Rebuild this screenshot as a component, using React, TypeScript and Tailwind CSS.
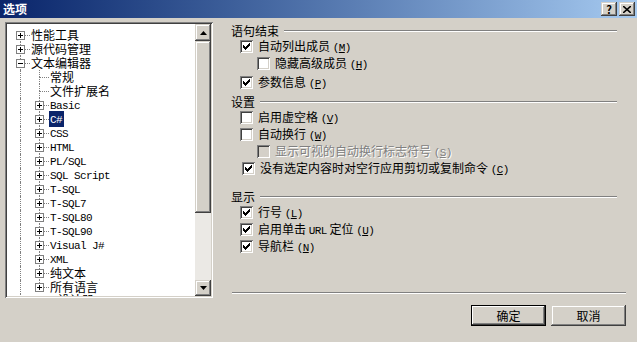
import React from 'react';

const cjk = "font-['Noto_Sans_CJK_SC',sans-serif]";
const mono = "font-['Liberation_Mono','Noto_Sans_CJK_SC',monospace] text-[11px] tracking-[-0.6px]";

const raised =
  'bg-[#d4d0c8] shadow-[inset_-1px_-1px_#404040,inset_1px_1px_#d4d0c8,inset_-2px_-2px_#808080,inset_2px_2px_#ffffff]';
const sunken =
  'shadow-[inset_1px_1px_#808080,inset_-1px_-1px_#ffffff,inset_2px_2px_#404040,inset_-2px_-2px_#d4d0c8]';

// split ascii runs into the narrow latin font
const Rich: React.FC<{ text: string }> = ({ text }) => (
  <>
    {text.split(/([\x21-\x7e][\x20-\x7e]*[\x21-\x7e]|[\x21-\x7e])/).map((part, i) =>
      /[\x21-\x7e]/.test(part) ? (
        <span key={i} className={mono}>{part}</span>
      ) : (
        <span key={i}>{part}</span>
      )
    )}
  </>
);

type Node = {
  label: string;
  level: 0 | 1;
  kind: 'plus' | 'minus' | 'leaf';
  first?: boolean;
  last?: boolean;
  selected?: boolean;
};

const nodes: Node[] = [
  { label: '性能工具', level: 0, kind: 'plus', first: true },
  { label: '源代码管理', level: 0, kind: 'plus' },
  { label: '文本编辑器', level: 0, kind: 'minus' },
  { label: '常规', level: 1, kind: 'leaf' },
  { label: '文件扩展名', level: 1, kind: 'leaf' },
  { label: 'Basic', level: 1, kind: 'plus' },
  { label: 'C#', level: 1, kind: 'plus', selected: true },
  { label: 'CSS', level: 1, kind: 'plus' },
  { label: 'HTML', level: 1, kind: 'plus' },
  { label: 'PL/SQL', level: 1, kind: 'plus' },
  { label: 'SQL Script', level: 1, kind: 'plus' },
  { label: 'T-SQL', level: 1, kind: 'plus' },
  { label: 'T-SQL7', level: 1, kind: 'plus' },
  { label: 'T-SQL80', level: 1, kind: 'plus' },
  { label: 'T-SQL90', level: 1, kind: 'plus' },
  { label: 'Visual J#', level: 1, kind: 'plus' },
  { label: 'XML', level: 1, kind: 'plus' },
  { label: '纯文本', level: 1, kind: 'plus' },
  { label: '所有语言', level: 1, kind: 'plus', last: true },
  { label: 'HTML 设计器', level: 0, kind: 'plus' },
];

const Connector: React.FC<{ node: Node }> = ({ node }) => (
  <div className="relative w-[19px] h-[14px] shrink-0">
    {!node.first && (
      <span className="absolute left-[9px] top-0 h-[7px] border-l border-dotted border-[#808080]" />
    )}
    {!node.last && (
      <span className="absolute left-[9px] top-[7px] h-[7px] border-l border-dotted border-[#808080]" />
    )}
    <span className="absolute left-[9px] top-[7px] w-[10px] border-t border-dotted border-[#808080]" />
    {node.kind !== 'leaf' && (
      <span className="absolute left-[5px] top-[3px] w-[9px] h-[9px] border border-[#808080] bg-white">
        <span className="absolute left-[1px] top-[3px] w-[5px] h-[1px] bg-black" />
        {node.kind === 'plus' && (
          <span className="absolute left-[3px] top-[1px] w-[1px] h-[5px] bg-black" />
        )}
      </span>
    )}
  </div>
);

const TreeRow: React.FC<{ node: Node }> = ({ node }) => (
  <div className="flex items-center h-[14px]">
    {node.level === 1 && (
      <div className="relative w-[19px] h-[14px] shrink-0">
        <span className="absolute left-[9px] top-0 h-[14px] border-l border-dotted border-[#808080]" />
      </div>
    )}
    <Connector node={node} />
    <span
      className={`pl-[1px] pr-[2px] leading-[14px] whitespace-nowrap ${
        node.selected ? 'bg-[#0a246a] text-white' : 'text-black'
      }`}
    >
      <Rich text={node.label} />
    </span>
  </div>
);

const Arrow: React.FC<{ up?: boolean }> = ({ up }) => (
  <svg width="7" height="4" viewBox="0 0 7 4">
    <path d={up ? 'M3.5 0 L7 4 L0 4 Z' : 'M0 0 L7 0 L3.5 4 Z'} fill="#000" />
  </svg>
);

const Check: React.FC = () => (
  <svg width="7" height="7" viewBox="0 0 7 7" shapeRendering="crispEdges">
    <path
      d="M0 2h1v3h-1z M1 3h1v3h-1z M2 4h1v3h-1z M3 3h1v3h-1z M4 2h1v3h-1z M5 1h1v3h-1z M6 0h1v3h-1z"
      fill="#000"
    />
  </svg>
);

const CheckRow: React.FC<{
  label: string;
  hot: string;
  checked?: boolean;
  disabled?: boolean;
  indent: string;
}> = ({ label, hot, checked, disabled, indent }) => (
  <div className={`flex items-center h-[17px] gap-[5px] ${indent}`}>
    <span
      className={`w-[13px] h-[13px] shrink-0 flex items-center justify-center ${sunken} ${
        disabled ? 'bg-[#d4d0c8]' : 'bg-white'
      }`}
    >
      {checked && <Check />}
    </span>
    <span
      className={`whitespace-nowrap leading-[14px] ${
        disabled ? 'text-[#808080] [text-shadow:1px_1px_0_#ffffff]' : 'text-black'
      }`}
    >
      <Rich text={label} />{' '}
      <span className={mono}>
        (<u>{hot}</u>)
      </span>
    </span>
  </div>
);

const GroupHeader: React.FC<{ title: string; className?: string }> = ({ title, className }) => (
  <div className={`flex items-center h-[14px] ${className ?? ''}`}>
    <span className="leading-[14px] whitespace-nowrap">{title}</span>
    <span className="flex-1 ml-[5px] mr-[9px] border-t border-t-[#808080] border-b border-b-white" />
  </div>
);

const TitleButton: React.FC<{ children: React.ReactNode }> = ({ children }) => (
  <span
    className={`w-[16px] h-[14px] flex items-center justify-center text-[11px] font-bold leading-none text-black ${raised}`}
  >
    {children}
  </span>
);

const App: React.FC = () => {
  return (
    <div className={`w-[637px] h-[342px] bg-[#d4d0c8] text-[12px] text-black overflow-hidden ${cjk}`}>
      {/* title bar */}
      <div className="h-[18px] flex items-center justify-between bg-linear-to-r from-[#0a246a] to-[#a6caf0] pl-[3px] pr-[2px]">
        <span className="text-white font-bold text-[12px] leading-none">选项</span>
        <div className="flex gap-[2px]">
          <TitleButton>?</TitleButton>
          <TitleButton>
            <svg width="8" height="7" viewBox="0 0 8 7">
              <path d="M0 0 L8 7 M8 0 L0 7" stroke="#000" strokeWidth="1.6" />
            </svg>
          </TitleButton>
        </div>
      </div>

      <div className="flex">
        {/* tree */}
        <div className={`ml-[5px] mt-[4px] w-[208px] h-[276px] bg-white p-[2px] flex ${sunken}`}>
          <div className="flex-1 overflow-hidden pt-[4px] pl-[4px]">
            {nodes.map((n) => (
              <TreeRow key={n.label} node={n} />
            ))}
          </div>
          <div className="w-[16px] flex flex-col bg-[#ebe9e5]">
            <div className={`h-[17px] flex items-center justify-center ${raised}`}>
              <Arrow up />
            </div>
            <div className={`h-[172px] ${raised}`} />
            <div className="flex-1" />
            <div className={`h-[16px] flex items-center justify-center ${raised}`}>
              <Arrow />
            </div>
          </div>
        </div>

        {/* options */}
        <div className="ml-[18px] w-[395px] pt-[6px] flex flex-col">
          <GroupHeader title="语句结束" />
          <CheckRow label="自动列出成员" hot="M" checked indent="pl-[9px]" />
          <CheckRow label="隐藏高级成员" hot="H" indent="pl-[26px]" />
          <div className="mt-[2px]">
            <CheckRow label="参数信息" hot="P" checked indent="pl-[9px]" />
          </div>

          <GroupHeader title="设置" className="mt-[4px]" />
          <CheckRow label="启用虚空格" hot="V" indent="pl-[9px]" />
          <CheckRow label="自动换行" hot="W" indent="pl-[9px]" />
          <CheckRow label="显示可视的自动换行标志符号" hot="S" disabled indent="pl-[26px]" />
          <CheckRow label="没有选定内容时对空行应用剪切或复制命令" hot="C" checked indent="pl-[11px]" />

          <GroupHeader title="显示" className="mt-[13px]" />
          <CheckRow label="行号" hot="L" checked indent="pl-[9px]" />
          <CheckRow label="启用单击 URL 定位" hot="U" checked indent="pl-[9px]" />
          <CheckRow label="导航栏" hot="N" checked indent="pl-[9px]" />

          <div className="mt-[37px] ml-[1px] border-t border-t-[#808080] border-b border-b-white" />

          <div className="mt-[11px] flex justify-end gap-[5px]">
            <button
              className={`w-[75px] h-[21px] flex items-center justify-center bg-[#d4d0c8] shadow-[inset_0_0_0_1px_#000000,inset_-2px_-2px_#404040,inset_2px_2px_#ffffff,inset_-3px_-3px_#808080,inset_3px_3px_#d4d0c8]`}
            >
              确定
            </button>
            <button className={`w-[75px] h-[21px] flex items-center justify-center ${raised}`}>取消</button>
          </div>
        </div>
      </div>
    </div>
  );
};

export default App;
